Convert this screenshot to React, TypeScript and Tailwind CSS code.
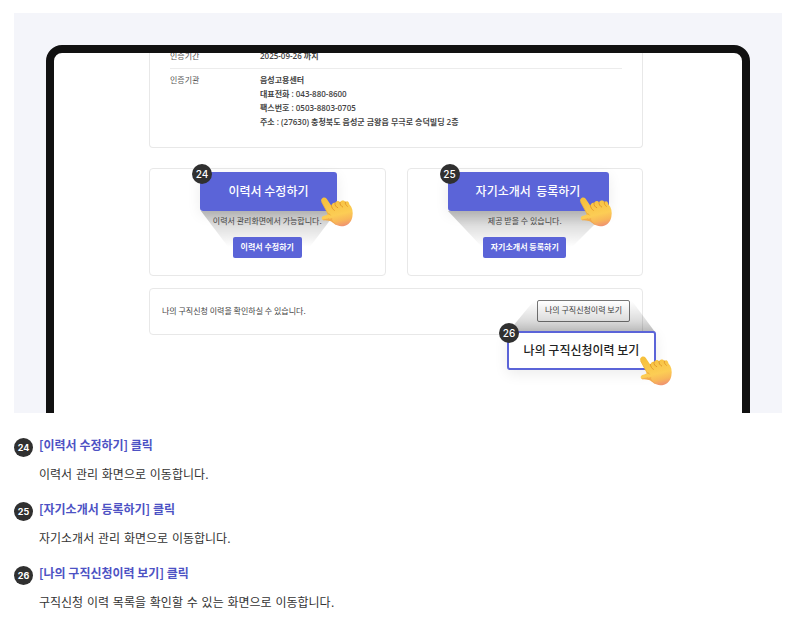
import type { ReactNode } from 'react';

const KR = "font-['Noto_Sans_CJK_KR',sans-serif]";
const BODY = "font-['DejaVu_Sans','Noto_Sans_CJK_KR',sans-serif]";
const INFO = "font-['Open_Sans','Noto_Sans_CJK_KR',sans-serif]";
const BADGE = "font-['Inter',sans-serif]";

function Hand({ id, place }: { id: string; place: string }) {
  return (
    <svg viewBox="0 0 96 88" className={`absolute top-[25px] h-[30px] w-8 overflow-visible ${place}`} aria-hidden="true">
      <defs>
        <linearGradient id={`${id}-skin`} x1="0.35" y1="0" x2="0.62" y2="1">
          <stop offset="0" stopColor="#f6c03c" />
          <stop offset="0.6" stopColor="#fccd55" />
          <stop offset="0.82" stopColor="#f8b659" />
          <stop offset="1" stopColor="#f09470" />
        </linearGradient>
      </defs>
      <path
        d="M1 12C-2 3 10-4 17 4L31 25C33 18 38 15 42 17C46 9 53 9 57 15C61 8 69 8 73 14C80 9 84 14 85 21C94 30 97 44 94 59C91 77 77 87 61 87C46 86 38 78 30 72C22 68 10 71 5 68C0 64 2 56 9 55C14 54 18 53 21 50Z"
        fill={`url(#${id}-skin)`}
      />
      <path d="M2 14L21 49" fill="none" stroke="#efaf3a" strokeWidth="2.5" strokeLinecap="round" />
      <path d="M5 67C15 63 26 66 34 62C30 68 39 76 48 84C40 81 35 76 30 72C22 68 10 71 5 67Z" fill="#ea9440" opacity="0.5" />
      <path
        d="M31 24C32 31 35 36 40 39M42 17C41 24 45 29 50 31M57 15C56 22 60 26 65 29M73 14C72 20 75 24 79 27"
        fill="none"
        stroke="#e39a2b"
        strokeWidth="3"
        strokeLinecap="round"
      />
      <path d="M21 50C24 49 26 50 28 53" fill="none" stroke="#e8a02f" strokeWidth="2.5" strokeLinecap="round" />
    </svg>
  );
}

function Callout({
  id,
  label,
  place,
  look,
  hand = '-right-4',
}: {
  id: string;
  label: ReactNode;
  place: string;
  look: string;
  hand?: string;
}) {
  return (
    <div className={`absolute z-10 h-[39px] ${place}`}>
      <button
        type="button"
        className={`h-full w-full rounded-[3px] pb-px text-[12px] leading-none font-medium whitespace-pre shadow-[0_4px_14px_rgba(0,0,0,0.08)] ${look}`}
      >
        {label}
      </button>
      <span
        className={`absolute -top-2 -left-2 flex size-5 items-center justify-center rounded-full bg-[#303030] text-[10px] leading-none font-medium text-white ${BADGE}`}
      >
        {id}
      </span>
      <Hand id={`hand-${id}`} place={hand} />
    </div>
  );
}

function Beam({ id, points, place, flip = false }: { id: string; points: string; place: string; flip?: boolean }) {
  return (
    <svg viewBox="0 0 160 36" preserveAspectRatio="none" className={`absolute ${place}`} aria-hidden="true">
      <defs>
        <linearGradient id={id} x1="0" y1={flip ? 1 : 0} x2="0" y2={flip ? 0 : 1}>
          <stop offset="0" stopColor="#000" stopOpacity="0.26" />
          <stop offset="0.4" stopColor="#000" stopOpacity="0.13" />
          <stop offset="1" stopColor="#000" stopOpacity="0" />
        </linearGradient>
      </defs>
      <polygon points={points} fill={`url(#${id})`} />
    </svg>
  );
}

const agency = ['음성고용센터', '대표전화 : 043-880-8600', '팩스번호 : 0503-8803-0705', '주소 : (27630) 충청북도 음성군 금왕읍 무극로 승덕빌딩 2층'];

const steps = [
  { id: '24', title: '[이력서 수정하기] 클릭', text: '이력서 관리 화면으로 이동합니다.' },
  { id: '25', title: '[자기소개서 등록하기] 클릭', text: '자기소개서 관리 화면으로 이동합니다.' },
  { id: '26', title: '[나의 구직신청이력 보기] 클릭', text: '구직신청 이력 목록을 확인할 수 있는 화면으로 이동합니다.' },
];

const card = 'relative rounded border border-[#e8e8e8]';
const smallButton = 'h-[21px] rounded-[2px] bg-[#5b64d8] pb-px text-[8px] leading-none font-bold text-white';

export default function App() {
  return (
    <main className={`bg-white px-[14px] pt-[13px] pr-[13px] text-[#333] ${KR}`}>
      <figure className="h-[400px] overflow-hidden bg-[#f4f5fa] px-8 pt-8">
        <div className="h-[400px] overflow-hidden rounded-t-2xl border-8 border-[#111] bg-white pr-[99px] pl-[95px]">
          <section className="flow-root h-[95px] rounded-b border border-t-0 border-[#e8e8e8] px-5 text-[8px] leading-[14px]">
            <dl className="-mt-1">
              <div className="flex border-b border-[#ececec] pb-[5px]">
                <dt className="w-[90px] text-[#555]">인증기간</dt>
                <dd className={`font-semibold text-[#444] ${INFO}`}>2025-09-26 까지</dd>
              </div>
              <div className="flex pt-1">
                <dt className="w-[90px] text-[#555]">인증기관</dt>
                <dd className={`font-semibold text-[#444] ${INFO}`}>
                  {agency.map((line) => (
                    <p key={line}>{line}</p>
                  ))}
                </dd>
              </div>
            </dl>
          </section>

          <div className="mt-5 grid grid-cols-2 gap-[21px]">
            <section className={`${card} flex h-[108px] flex-col items-center pt-[45px]`}>
              <Beam id="beam-24" points="0,0 160,0 128,36 32,36" place="top-[42px] left-[51px] h-9 w-[136px]" />
              <p className="relative text-[8px] leading-[14px] text-[#444]">이력서 관리화면에서 가능합니다.</p>
              <button type="button" className={`relative mt-[9px] w-[69px] ${smallButton}`}>
                이력서 수정하기
              </button>
              <Callout id="24" label="이력서 수정하기" place="top-[3px] left-[50px] w-[137px]" look="bg-[#5b64d8] text-white" />
            </section>
            <section className={`${card} flex h-[108px] flex-col items-center pt-[45px]`}>
              <Beam id="beam-25" points="0,0 160,0 124,36 34,36" place="top-[42px] left-10 h-9 w-40" />
              <p className="relative text-[8px] leading-[14px] text-[#444]">제공 받을 수 있습니다.</p>
              <button type="button" className={`relative mt-[9px] w-[83px] ${smallButton}`}>
                자기소개서 등록하기
              </button>
              <Callout
                id="25"
                label="자기소개서  등록하기"
                place="top-[3px] left-10 w-[161px]"
                look="bg-[#5b64d8] text-white"
                hand="-right-[3px]"
              />
            </section>
          </div>

          <section className={`${card} mt-3 flex h-[47px] items-center justify-between px-3 pb-[2px] text-[8px] text-[#444]`}>
            <p className="leading-[14px]">나의 구직신청 이력을 확인하실 수 있습니다.</p>
            <button type="button" className="h-[22px] w-[93px] rounded-[2px] border border-[#777] pb-px leading-none">
              나의 구직신청이력 보기
            </button>
            <Beam id="beam-26" points="28,0 135,0 160,36 0,36" place="top-3 -right-[13px] h-[31px] w-[147px]" flip />
            <Callout
              id="26"
              label="나의 구직신청이력 보기"
              place="top-[42px] -right-[14px] w-[149px]"
              look="border-2 border-[#5b64d8] bg-white text-[#222]"
            />
          </section>
        </div>
      </figure>

      <ol className="mt-[22px] space-y-[14px]">
        {steps.map((step) => (
          <li key={step.id} className="flex gap-[6px]">
            <span className={`mt-[3px] flex size-[19px] shrink-0 items-center justify-center rounded-full bg-[#303030] text-[9px] leading-none font-bold text-white ${BADGE}`}>
              {step.id}
            </span>
            <div className="text-[12px]">
              <h3 className="leading-[19px] font-bold text-[#4d52c4]">{step.title}</h3>
              <p className={`mt-[11px] leading-5 text-[#333] ${BODY}`}>{step.text}</p>
            </div>
          </li>
        ))}
      </ol>
    </main>
  );
}
